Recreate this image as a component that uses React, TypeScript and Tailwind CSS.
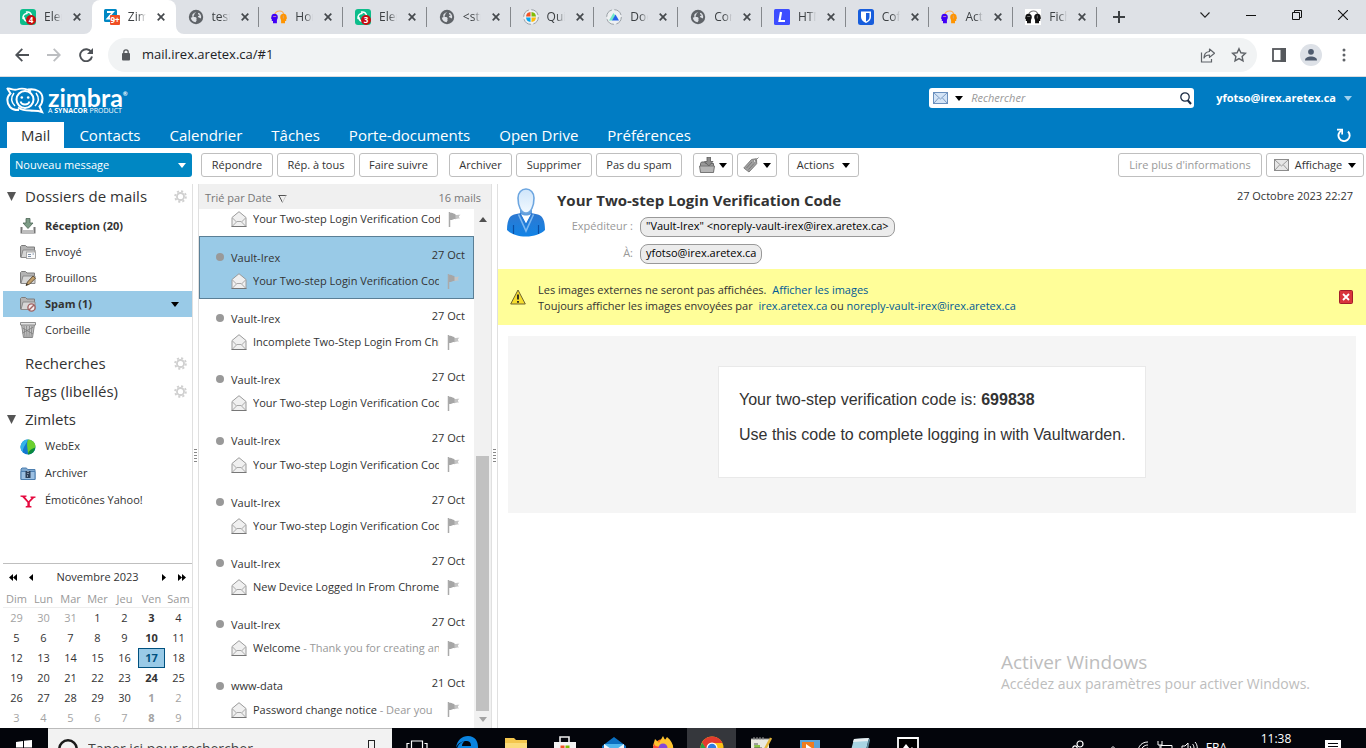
import { useState } from "react";
import type { ReactNode } from "react";

/* ---------- small shared icons ---------- */

const Caret = ({ className = "text-black" }: { className?: string }) => (
  <svg width="8" height="5" viewBox="0 0 8 5" className={`shrink-0 ${className}`}>
    <path d="M0 0h8L4 5z" fill="currentColor" />
  </svg>
);

const CloseMark = () => (
  <svg width="8" height="8" viewBox="0 0 8 8" className="shrink-0">
    <path d="M.7.7l6.6 6.6M7.3.7L.7 7.3" stroke="#45494d" strokeWidth="1.7" />
  </svg>
);

const Envelope = ({ tone = "gray" }: { tone?: "gray" | "blue" }) => (
  <svg width="15" height="12" viewBox="0 0 15 12" className="shrink-0">
    <rect
      x=".5"
      y=".5"
      width="14"
      height="11"
      fill={tone === "blue" ? "#d4e4f6" : "#e6e6e6"}
      stroke={tone === "blue" ? "#6b8fbd" : "#8c8c8c"}
    />
    <path
      d="M1 1l6.500 6L14 1M1 11l4.500-5M14 11L9.500 6"
      fill="none"
      stroke={tone === "blue" ? "#7d9cc4" : "#999"}
    />
  </svg>
);

const OpenEnvelope = () => (
  <svg width="16" height="16" viewBox="0 0 16 16" className="shrink-0">
    <path d="M1 6.500L8 .7l7 5.800v9H1z" fill="#f0f0f0" stroke="#9a9a9a" />
    <path d="M1.500 15L6 10.500h4l4.500 4.500M1.500 7l4 4M14.500 7l-4 4" fill="none" stroke="#a8a8a8" />
    <path d="M.5 15.500h15" stroke="#777" />
  </svg>
);

const Flag = () => (
  <svg width="13" height="15" viewBox="0 0 13 15" className="shrink-0">
    <path d="M1.500 0v15" stroke="#aaa" strokeWidth="1.500" />
    <path d="M6 3c2 .3 3-.3 6.500-.2C10.500 4 10.500 5 12 6.500 9 6.500 8 7.500 6 7z" fill="#c4c4c4" />
    <path d="M2 1c3-.8 3.500 1 5.500 1.200v4.500C5.500 7 4 8.300 2 8z" fill="#a6a6a6" />
  </svg>
);

const Gear = () => (
  <svg width="13" height="13" viewBox="0 0 14 14" className="shrink-0">
    <circle cx="7" cy="7" r="5.800" fill="none" stroke="#d0d0d0" strokeWidth="2" strokeDasharray="2.270 2.280" />
    <circle cx="7" cy="7" r="3.800" fill="none" stroke="#d0d0d0" strokeWidth="2" />
  </svg>
);

/* ---------- browser tab icons ---------- */

const ElementIcon = ({ count }: { count: string }) => (
  <svg width="16" height="16" viewBox="0 0 16 16">
    <rect width="16" height="16" rx="3" fill="#0dbd8b" />
    <path d="M6.500 3c3-.5 5 1.500 5 4M3 9.500C2.700 6.500 4.500 4.500 7 4.500M9 12.500c-3 .5-5-1.500-5-4" fill="none" stroke="#fff" strokeWidth="1.500" strokeLinecap="round" />
    <circle cx="11" cy="11" r="5" fill="#c70d12" />
    <text x="11" y="14" textAnchor="middle" fontSize="8" fontWeight="700" fill="#fff" fontFamily="Open Sans, sans-serif">{count}</text>
  </svg>
);

const ZimbraTabIcon = () => (
  <svg width="16" height="16" viewBox="0 0 16 16">
    <rect width="13" height="13" rx="1.500" fill="#0087c3" />
    <path d="M3 3h6L3.500 9.500H7" fill="none" stroke="#fff" strokeWidth="1.800" />
    <rect x="6" y="6" width="10" height="10" rx="1" fill="#f04e23" />
    <text x="11" y="14" textAnchor="middle" fontSize="8" fontWeight="700" fill="#fff" fontFamily="Open Sans, sans-serif">9+</text>
  </svg>
);

const GlobeIcon = () => (
  <svg width="16" height="16" viewBox="0 0 16 16">
    <circle cx="8" cy="8" r="7.200" fill="#5f6368" />
    <path d="M8.200 3.200c-.5 1-2.200 1-1.900 2.300.3 1-1.300 1-.8 2 .5.900 2.500.2 3 1.500.4 1-.5 1.500 0 2.100.5.800-.6 1.300-.8 2.200C5 13.200 3 11 2.800 8.500c1.700.2 1.800-.5 1.500-1.500C3.900 5.500 5.700 3.400 8.200 3.200z" fill="#dee1e6" />
    <path d="M10.300 3.800c-.7 1.200-.2 2 .8 2 .8 0 .6.800-.3 1-1.400.5-1 1.700.2 1.700 1 .1.800 1.200 2 .7.700-2.200-.4-4.600-2.700-5.400z" fill="#dee1e6" />
  </svg>
);

const HeadsIcon = ({ dark = false }: { dark?: boolean }) => (
  <svg width="16" height="16" viewBox="0 0 16 16">
    {dark && <path d="M0 0h16v16H0z" fill="#fff" />}
    <path d="M4 5C5 1.200 12 .8 12.500 5" fill="none" stroke={dark ? "#777" : "#ffad4d"} strokeWidth="1.200" />
    <path d="M.8 6C2.500 4 6.800 4.500 6.800 8c0 1.800-.9 2.300-.9 3.700v2.500H2V12H.8v-2L0 9.500z" fill={dark ? "#111" : "#4200f5"} />
    <path d="M15.200 6C13.500 4 9.200 4.500 9.200 8c0 1.800.9 2.300.9 3.700v2.500H14V12h1.200v-2l.8-.5z" fill={dark ? "#111" : "#ff9400"} />
    <path d="M2.200 7.500h3M12.300 6.500v3" stroke={dark ? "#888" : "#c9a5a0"} strokeWidth=".8" />
  </svg>
);

const QuarterIcon = () => (
  <svg width="16" height="16" viewBox="0 0 16 16">
    <circle cx="8" cy="8" r="7.300" fill="#eef0f2" stroke="#9aa0a6" strokeDasharray="9 2.500" />
    <path d="M7.500 3v4.500H3A5 5 0 017.500 3z" fill="#f35325" />
    <path d="M8.500 3v4.500H13A5 5 0 008.500 3z" fill="#81bc06" />
    <path d="M7.500 13V8.500H3A5 5 0 007.500 13z" fill="#05a6f0" />
    <path d="M8.500 13V8.500H13A5 5 0 018.500 13z" fill="#ffba08" />
  </svg>
);

const PeakIcon = () => (
  <svg width="16" height="16" viewBox="0 0 16 16">
    <circle cx="8" cy="8" r="7.300" fill="#eef0f2" stroke="#9aa0a6" strokeDasharray="9 2.500" />
    <path d="M3 11.500L7.500 4l1.800 2.500-3 5z" fill="#6ee7c8" />
    <path d="M6 11.500l3.500-6 3.500 6z" fill="#2563eb" />
  </svg>
);

const LetterIcon = () => (
  <svg width="16" height="16" viewBox="0 0 16 16">
    <rect width="16" height="16" rx="1.500" fill="#3d4dff" />
    <path d="M7 3L5.500 12h5.500" fill="none" stroke="#fff" strokeWidth="2.200" />
  </svg>
);

const ShieldIcon = () => (
  <svg width="16" height="16" viewBox="0 0 16 16">
    <rect width="16" height="16" rx="2.500" fill="#175ddc" />
    <path d="M3 2.500h10V8c0 3-2.500 5-5 6-2.500-1-5-3-5-6z" fill="#fff" />
    <path d="M8 4h3.500v4c0 2-1.500 3.500-3.500 4.500z" fill="#175ddc" />
  </svg>
);

interface BrowserTab {
  label: string;
  icon: ReactNode;
}

const browserTabs: BrowserTab[] = [
  { label: "Element", icon: <ElementIcon count="4" /> },
  { label: "Zimbra", icon: <ZimbraTabIcon /> },
  { label: "tests", icon: <GlobeIcon /> },
  { label: "Home", icon: <HeadsIcon /> },
  { label: "Element", icon: <ElementIcon count="3" /> },
  { label: "<strong", icon: <GlobeIcon /> },
  { label: "Quick", icon: <QuarterIcon /> },
  { label: "Docs", icon: <PeakIcon /> },
  { label: "Config", icon: <GlobeIcon /> },
  { label: "HTML", icon: <LetterIcon /> },
  { label: "Coffre", icon: <ShieldIcon /> },
  { label: "Activer", icon: <HeadsIcon /> },
  { label: "Fichier", icon: <HeadsIcon dark /> },
];

const TabStrip = () => (
  <div className="flex h-[34px] shrink-0 bg-[#dee1e6] pl-2">
    <div className="flex w-full max-w-[1089px]">
      {browserTabs.map((tab, i) => (
        <div
          key={i}
          className={`relative flex min-w-0 flex-1 items-center pl-3 ${i === 1 ? "rounded-t-lg bg-white" : ""}`}
        >
          <span className="h-4 w-4 shrink-0">{tab.icon}</span>
          <span className="ml-2 w-[18px] overflow-hidden text-xs whitespace-nowrap text-[#3c4043] [mask-image:linear-gradient(to_right,black_55%,transparent)]">
            {tab.label}
          </span>
          <button aria-label={`Fermer ${tab.label}`} className="ml-[11px]">
            <CloseMark />
          </button>
          {i > 1 && <span className="absolute top-[7px] right-0 h-5 w-px bg-[#85888c]" />}
          {i === 1 && (
            <>
              <svg width="8" height="8" viewBox="0 0 8 8" className="absolute bottom-0 -left-2">
                <path d="M8 0v8H0a8 8 0 008-8z" fill="#fff" />
              </svg>
              <svg width="8" height="8" viewBox="0 0 8 8" className="absolute -right-2 bottom-0">
                <path d="M0 0v8h8a8 8 0 01-8-8z" fill="#fff" />
              </svg>
            </>
          )}
        </div>
      ))}
    </div>
    <button aria-label="Nouvel onglet" className="ml-4">
      <svg width="12" height="12" viewBox="0 0 12 12">
        <path d="M6 0v12M0 6h12" stroke="#3c4043" strokeWidth="2" />
      </svg>
    </button>
    <div className="mb-1 ml-auto flex shrink-0 items-center gap-9 pr-[18px]">
      <button aria-label="Rechercher des onglets">
        <svg width="10" height="6" viewBox="0 0 10 6"><path d="M.5.500L5 5.200 9.500.5" fill="none" stroke="#222" strokeWidth="1.100" /></svg>
      </button>
      <button aria-label="Réduire">
        <svg width="10" height="10" viewBox="0 0 10 10"><path d="M0 5.500h10" stroke="#111" /></svg>
      </button>
      <button aria-label="Restaurer">
        <svg width="10" height="10" viewBox="0 0 10 10"><path d="M.5 2.500h7v7h-7zM2.500 2.500v-2h7v7h-2" fill="none" stroke="#111" /></svg>
      </button>
      <button aria-label="Fermer la fenêtre">
        <svg width="10" height="10" viewBox="0 0 10 10"><path d="M0 0l10 10M10 0L0 10" stroke="#111" strokeWidth="1.100" /></svg>
      </button>
    </div>
  </div>
);

const AddressBar = () => (
  <div className="flex h-[43px] shrink-0 items-center border-b border-[#dadce0] bg-white pr-5 pl-[15px]">
    <button aria-label="Précédent">
      <svg width="14" height="14" viewBox="0 0 14 14"><path d="M14 7H1.500M7.300.8L1.200 7l6.100 6.200" fill="none" stroke="#4d5156" strokeWidth="1.800" /></svg>
    </button>
    <button aria-label="Suivant" className="ml-[18px]">
      <svg width="14" height="14" viewBox="0 0 14 14"><path d="M0 7h12.500M6.700.8L12.800 7l-6.100 6.200" fill="none" stroke="#bcbec1" strokeWidth="1.800" /></svg>
    </button>
    <button aria-label="Actualiser" className="ml-[18px]">
      <svg width="14" height="14" viewBox="0 0 14 14">
        <path d="M12.300 4.200A6 6 0 1013 8.500" fill="none" stroke="#4d5156" strokeWidth="1.900" />
        <path d="M14 0v6H8z" fill="#4d5156" />
      </svg>
    </button>
    <div className="ml-[15px] flex h-[34px] flex-1 items-center rounded-full bg-[#f1f3f4] pl-[14px]">
      <svg width="8" height="12" viewBox="0 0 8 12" className="shrink-0">
        <path d="M1.800 5V3a2.200 2.200 0 014.400 0v2" fill="none" stroke="#55585c" strokeWidth="1.300" />
        <rect y="4" width="8" height="7.500" rx="1" fill="#55585c" />
      </svg>
      <input
        aria-label="Adresse"
        defaultValue="mail.irex.aretex.ca/#1"
        className="ml-3 min-w-0 flex-1 bg-transparent text-[13px] text-[#202124] outline-none"
      />
      <button aria-label="Partager">
        <svg width="15" height="15" viewBox="0 0 15 15">
          <path d="M1.500 4.500v9.500h10v-3" fill="none" stroke="#5f6368" strokeWidth="1.200" />
          <path d="M9.500 1l5 4.200-5 4.200V7c-3 0-4.500 1-5.500 3 0-3.500 2-6.200 5.500-6.500z" fill="none" stroke="#5f6368" strokeWidth="1.200" strokeLinejoin="round" />
        </svg>
      </button>
      <button aria-label="Favori" className="mr-2.5 ml-4">
        <svg width="16" height="16" viewBox="0 0 16 16">
          <path d="M8 1.700l1.900 4.100 4.500.5-3.300 3.100.9 4.500-4-2.300-4 2.300.9-4.500L1.600 6.300l4.500-.5z" fill="none" stroke="#5f6368" strokeWidth="1.400" />
        </svg>
      </button>
    </div>
    <button aria-label="Panneau latéral" className="ml-[15px]">
      <svg width="14" height="14" viewBox="0 0 14 14">
        <rect x="1" y="1" width="12" height="12" fill="none" stroke="#55585c" strokeWidth="1.800" />
        <rect x="8.500" width="5.500" height="14" fill="#55585c" />
      </svg>
    </button>
    <button aria-label="Profil" className="ml-[14px]">
      <svg width="22" height="22" viewBox="0 0 22 22">
        <circle cx="11" cy="11" r="11" fill="#dde1e7" />
        <circle cx="11" cy="7.800" r="2.900" fill="#4f5b6e" />
        <path d="M5 16.500c0-3 3-4 6-4s6 1 6 4z" fill="#4f5b6e" />
      </svg>
    </button>
    <button aria-label="Menu" className="ml-5">
      <svg width="4" height="14" viewBox="0 0 4 14" fill="#5f6368">
        <circle cx="2" cy="2" r="1.500" /><circle cx="2" cy="7" r="1.500" /><circle cx="2" cy="12" r="1.500" />
      </svg>
    </button>
  </div>
);

/* ---------- Zimbra header ---------- */

const apps = ["Mail", "Contacts", "Calendrier", "Tâches", "Porte-documents", "Open Drive", "Préférences"];

const AppHeader = ({ active, onSelect }: { active: string; onSelect: (name: string) => void }) => (
  <header className="shrink-0 bg-[#007cc3] text-white">
    <div className="flex h-[45px] items-start">
      <a href="#accueil" className="mt-2.5 ml-1.5 flex">
        <svg width="38" height="27" viewBox="0 0 38 27" fill="none" stroke="#fff">
          <path d="M1.500 1.500C7 2 8 3.500 11 2.500c5-1.700 11-.5 14 2" strokeWidth="1.800" />
          <path d="M1 1l3.500 5.500C.5 10 .3 15.500 4 20c2 2.200 5.500 3.200 9 3" strokeWidth="2" />
          <path d="M22 2.500c8-1.500 14.500 2.500 14.500 9 0 4-1 6-3 8l2.500 5.500c-5-2-8-1-12-1.500-5 0-9-1-12-3" strokeWidth="2" />
          <circle cx="19" cy="12.500" r="8.500" strokeWidth="2" />
          <path d="M14.500 14.500c1 4 8 4 9 0" strokeWidth="1.800" />
          <path d="M8 6c-3 4-3 9 1 13M30 6c3 4 3 9-1 13" strokeWidth="1.500" />
          <circle cx="15.800" cy="10.500" r="1.300" fill="#fff" stroke="none" />
          <circle cx="22.200" cy="10.500" r="1.300" fill="#fff" stroke="none" />
        </svg>
        <span className="ml-1 flex flex-col">
          <span className="flex font-[Lato] text-[25px] leading-5 font-bold">
            zimbra
            <span className="text-[6px] leading-[14px]">®</span>
          </span>
          <span className="text-[7px] leading-2">
            A <b>SYNACOR</b> PRODUCT
          </span>
        </span>
      </a>
      <div className="mt-[11px] ml-auto flex h-5 w-[265px] items-center rounded-[3px] bg-white pr-0.5 pl-1">
        <Envelope tone="blue" />
        <button aria-label="Type de recherche" className="ml-[7px]">
          <Caret />
        </button>
        <input
          type="search"
          aria-label="Rechercher"
          placeholder="Rechercher"
          className="ml-2 min-w-0 flex-1 bg-transparent text-[11px] text-black italic outline-none placeholder:text-[#999]"
        />
        <button aria-label="Lancer la recherche">
          <svg width="12" height="13" viewBox="0 0 12 13">
            <circle cx="5" cy="5" r="4.200" fill="none" stroke="#1b2c45" strokeWidth="1.300" />
            <path d="M7.500 8l3.500 4" stroke="#1b2c45" strokeWidth="2" />
          </svg>
        </button>
      </div>
      <button className="mt-[11px] mr-[14px] ml-[22px] flex h-5 items-center gap-2 text-[11px] font-bold">
        yfotso@irex.aretex.ca
        <Caret className="text-[#9fd0ee]" />
      </button>
    </div>
    <nav className="flex h-[26px] items-center pl-[7px]">
      {apps.map((name) => (
        <a
          key={name}
          href={`#${name}`}
          onClick={() => onSelect(name)}
          className={`mr-px flex h-full items-center px-[14px] text-[15px] whitespace-nowrap ${active === name ? "bg-white text-[#333]" : ""}`}
        >
          {name}
        </a>
      ))}
      <button aria-label="Actualiser la boîte" className="mr-[15px] ml-auto">
        <svg width="14" height="14" viewBox="0 0 14 14">
          <path d="M4.500 2.500A5.600 5.600 0 1011 3.500" fill="none" stroke="#fff" strokeWidth="1.900" />
          <path d="M0 .8h6v5.700H4.300V2.500H0z" fill="#fff" />
        </svg>
      </button>
    </nav>
  </header>
);

/* ---------- action toolbar ---------- */

const ToolButton = ({ className, children, label }: { className: string; children: ReactNode; label?: string }) => (
  <button
    aria-label={label}
    className={`flex h-6 shrink-0 items-center justify-center rounded-[3px] border border-[#bfbfbf] bg-white text-[11px] whitespace-nowrap ${className}`}
  >
    {children}
  </button>
);

const Toolbar = () => (
  <div className="flex h-9 shrink-0 items-center bg-white pr-0.5 pb-0.5 pl-2.5 text-[#333]">
    <button className="mr-[9px] flex h-6 w-[182px] shrink-0 items-center justify-between rounded-[3px] bg-[#0087c3] pr-1.5 pl-[5px] text-[11px] text-white">
      Nouveau message
      <Caret className="text-white" />
    </button>
    <ToolButton className="w-[72px]">Répondre</ToolButton>
    <ToolButton className="ml-1 w-[78px]">Rép. à tous</ToolButton>
    <ToolButton className="ml-1 w-[79px]">Faire suivre</ToolButton>
    <ToolButton className="ml-[11px] w-[63px]">Archiver</ToolButton>
    <ToolButton className="ml-1 w-[76px]">Supprimer</ToolButton>
    <ToolButton className="ml-1 w-[86px]">Pas du spam</ToolButton>
    <ToolButton className="ml-[11px] w-10 gap-1" label="Déplacer">
      <svg width="16" height="16" viewBox="0 0 16 16">
        <path d="M1.500 15V6.500l1-1.500h3l1 1.500h8V15z" fill="#999" stroke="#666" />
        <path d="M.5 9h15l-1 6.500h-13z" fill="#b5b5b5" stroke="#777" />
        <path d="M8 0h3.500v4.500H14L9.800 9 5.500 4.500H8z" fill="#8b8b8b" stroke="#5a5a5a" strokeWidth=".8" />
      </svg>
      <Caret />
    </ToolButton>
    <ToolButton className="ml-1 w-10 gap-1" label="Étiquettes">
      <svg width="16" height="16" viewBox="0 0 16 16">
        <path d="M.8 11L8.500 2.500l5-.8.200 5L6 15z" fill="#a0a0a0" stroke="#808080" />
        <path d="M3.500 11l5.500-6M5.500 12.500l5.500-6" stroke="#7a7a7a" />
        <circle cx="11.700" cy="4" r="1.200" fill="#fff" stroke="#666" strokeWidth=".6" />
        <path d="M12 4l3.500-3.500" stroke="#888" />
      </svg>
      <Caret />
    </ToolButton>
    <ToolButton className="ml-[11px] w-[71px] gap-2">
      Actions
      <Caret />
    </ToolButton>
    <ToolButton className="ml-auto w-[144px] text-[#999]">Lire plus d&apos;informations</ToolButton>
    <ToolButton className="ml-1 w-[98px] gap-[6px]">
      <Envelope />
      Affichage
      <Caret />
    </ToolButton>
  </div>
);

/* ---------- folder tree ---------- */

const FolderBase = () => (
  <>
    <path d="M.5 13V2.500l1-1h4l1.500 1.500h7.500V13z" fill="#b4b4b4" stroke="#7c7c7c" />
    <path d="M1 13.500L3 6h12v7.500z" fill="#d6d6d6" stroke="#8b8b8b" />
  </>
);

const folders = [
  {
    name: "Réception (20)",
    icon: (
      <svg width="16" height="16" viewBox="0 0 16 16">
        <path d="M1.500 9v5.500h13V9" fill="none" stroke="#777" strokeWidth="2" />
        <path d="M2 12h12v3H2z" fill="#bdbdbd" />
        <path d="M6 .5h4V5h3L8 10.500 3 5h3z" fill="#7d9c86" stroke="#4c6655" strokeWidth=".8" />
      </svg>
    ),
    bold: true,
  },
  {
    name: "Envoyé",
    icon: (
      <svg width="16" height="16" viewBox="0 0 16 16">
        <FolderBase />
        <rect x="6.500" y="8" width="9" height="6.500" fill="#fafafa" stroke="#999" strokeWidth=".8" />
        <path d="M8 10.500h3M8 12.500h3M12.500 10h1.500" stroke="#7d8fa8" />
      </svg>
    ),
  },
  {
    name: "Brouillons",
    icon: (
      <svg width="16" height="16" viewBox="0 0 16 16">
        <FolderBase />
        <path d="M6 15.500l1.500-3.500L13 6l2.500 2.200-6 6z" fill="#c2a06b" stroke="#5b4a33" strokeWidth=".9" />
        <path d="M6 15.500l.8-2 1.200 1.200z" fill="#222" />
      </svg>
    ),
  },
  {
    name: "Spam (1)",
    icon: (
      <svg width="16" height="16" viewBox="0 0 16 16">
        <FolderBase />
        <circle cx="11.500" cy="11.500" r="3.600" fill="#f4eeee" stroke="#a06464" strokeWidth="1.400" />
        <path d="M9 14l5-5" stroke="#a06464" strokeWidth="1.400" />
      </svg>
    ),
    bold: true,
  },
  {
    name: "Corbeille",
    icon: (
      <svg width="16" height="16" viewBox="0 0 16 16">
        <path d="M1.500 2.500h13L12.500 15.500h-9z" fill="#c4c4c4" stroke="#888" />
        <path d="M4 4l1 11M6.500 4l.5 11M9.500 4L9 15M12 4l-1 11M2.500 6l10.500 6M2.500 11L13.500 5" stroke="#777" strokeWidth=".7" />
        <path d="M.5.5h15V3H.5z" fill="#e4e4e4" stroke="#777" strokeWidth=".8" />
      </svg>
    ),
  },
];

const zimlets = [
  {
    name: "WebEx",
    icon: (
      <svg width="16" height="16" viewBox="0 0 16 16">
        <circle cx="8" cy="8" r="7.500" fill="#1478d0" />
        <path d="M8 .5a7.500 7.500 0 00-5 13C2 9 6 6 8 .5z" fill="#35b4e8" />
        <path d="M8 .5C6 5 8 10 8 15.500 11 14 15 11 15.500 7 15 3 12 .8 8 .5z" fill="#6bd02e" />
        <path d="M8 15.500c0-3 2-5 7.300-7A7.500 7.500 0 018 15.500z" fill="#0b8a3c" />
      </svg>
    ),
  },
  {
    name: "Archiver",
    icon: (
      <svg width="16" height="16" viewBox="0 0 16 16">
        <path d="M1 13.500V3l1-1h4.500l1 1.500H15v10z" fill="#7fa8cf" stroke="#4d7fb0" />
        <path d="M1 13.500V5.500h14v8z" fill="#9cc0e2" stroke="#4d7fb0" />
        <path d="M5.500 5h5v7h-5z" fill="#2c3e57" />
        <path d="M8 5v4M7 10h2" stroke="#d5e3f0" strokeDasharray="1 1" />
      </svg>
    ),
  },
  {
    name: "Émoticônes Yahoo!",
    icon: (
      <svg width="16" height="16" viewBox="0 0 16 16">
        <path d="M.5 2.500h6v1.200L5 4 8.500 8.200l3-3.200-1-.3V3.500h5v1.200l-1.500.4L9.800 9.300v3.500l1.700.4v1.300H5.700v-1.300l1.700-.4V9.500L2.300 4 .5 3.700z" fill="#e5093f" />
      </svg>
    ),
  },
];

const TreeHeading = ({ title, open = false, gear = false }: { title: string; open?: boolean; gear?: boolean }) => (
  <h2 className="flex h-7 items-center pr-[5px] pl-1 text-[15px]">
    <span className="w-[18px]">
      {open && (
        <svg width="9" height="9" viewBox="0 0 9 9"><path d="M0 0h9L4.500 9z" fill="#555" /></svg>
      )}
    </span>
    <span className="flex-1">{title}</span>
    {gear && <Gear />}
  </h2>
);

const weekDays = ["Dim", "Lun", "Mar", "Mer", "Jeu", "Ven", "Sam"];
const weeks = [
  [29, 30, 31, 1, 2, 3, 4],
  [5, 6, 7, 8, 9, 10, 11],
  [12, 13, 14, 15, 16, 17, 18],
  [19, 20, 21, 22, 23, 24, 25],
  [26, 27, 28, 29, 30, 1, 2],
  [3, 4, 5, 6, 7, 8, 9],
];

const dayClass = (row: number, col: number, day: number) => {
  const outside = (row === 0 && day > 20) || (row > 3 && day < 20);
  const today = row === 2 && day === 17;
  const color = today
    ? "bg-[#99cae7] text-[#00517f] outline outline-[#00517f] -outline-offset-1"
    : outside
      ? "text-[#a3a3a3]"
      : "text-[#333]";
  // Fridays carry a weekly appointment
  return `${color} ${col === 5 ? "font-bold" : ""}`;
};

const MiniCalendar = () => (
  <div className="mt-auto shrink-0 border-t border-[#bfbfbf] text-[11px]">
    <div className="flex h-7 items-center pr-1.5 pl-1.5">
      <button aria-label="Année précédente">
        <svg width="8" height="7" viewBox="0 0 8 7"><path d="M4 0v7L0 3.500zM8 0v7L4 3.500z" /></svg>
      </button>
      <button aria-label="Mois précédent" className="ml-3">
        <svg width="4" height="7" viewBox="0 0 4 7"><path d="M4 0v7L0 3.500z" /></svg>
      </button>
      <span className="flex-1 text-center">Novembre 2023</span>
      <button aria-label="Mois suivant" className="mr-3">
        <svg width="4" height="7" viewBox="0 0 4 7"><path d="M0 0v7l4-3.500z" /></svg>
      </button>
      <button aria-label="Année suivante">
        <svg width="8" height="7" viewBox="0 0 8 7"><path d="M0 0v7l4-3.500zM4 0v7l4-3.500z" /></svg>
      </button>
    </div>
    <table className="w-full table-fixed text-center">
      <thead>
        <tr className="h-4 border-b border-[#eee] leading-3 text-[#999]">
          {weekDays.map((d) => (
            <th key={d} className="p-0 font-normal">{d}</th>
          ))}
        </tr>
      </thead>
      <tbody>
        {weeks.map((week, row) => (
          <tr key={row} className="h-5 leading-5">
            {week.map((day, col) => (
              <td key={col} className={`p-0 ${dayClass(row, col, day)}`}>{day}</td>
            ))}
          </tr>
        ))}
      </tbody>
    </table>
  </div>
);

const Sidebar = () => (
  <aside className="flex w-[192px] shrink-0 flex-col pl-[3px] text-[#333]">
    <div className="-mt-0.5 mb-[3px]">
      <TreeHeading title="Dossiers de mails" open gear />
    </div>
    {folders.map((f) => (
      <a
        key={f.name}
        href={`#${f.name}`}
        className={`flex h-[26px] items-center gap-[9px] pr-[13px] pl-[17px] text-[11px] ${f.bold ? "font-bold" : ""} ${f.name === "Spam (1)" ? "bg-[#99cae7]" : ""}`}
      >
        {f.icon}
        <span className="flex-1">{f.name}</span>
        {f.name === "Spam (1)" && <Caret />}
      </a>
    ))}
    <div className="mt-1.5">
      <TreeHeading title="Recherches" gear />
      <TreeHeading title="Tags (libellés)" gear />
      <TreeHeading title="Zimlets" open />
    </div>
    {zimlets.map((z) => (
      <a key={z.name} href={`#${z.name}`} className="flex h-[27px] items-center gap-[9px] pl-[17px] text-[11px]">
        {z.icon}
        {z.name}
      </a>
    ))}
    <MiniCalendar />
  </aside>
);

/* ---------- splitter between columns ---------- */

const Splitter = () => (
  <div className="flex w-[7px] shrink-0 items-center justify-center border-x border-[#e0e0e0] bg-white">
    <svg width="3" height="14" viewBox="0 0 3 14">
      <path d="M0 .5h3M0 3.500h3M0 6.500h3M0 9.500h3M0 12.500h3" stroke="#888" />
    </svg>
  </div>
);

/* ---------- message list ---------- */

interface Message {
  from: string;
  date: string;
  subject: string;
  preview?: string;
}

const code = "Your Two-step Login Verification Code";

const messages: Message[] = [
  { from: "Vault-Irex", date: "27 Oct", subject: code },
  { from: "Vault-Irex", date: "27 Oct", subject: "Incomplete Two-Step Login From Chrome" },
  { from: "Vault-Irex", date: "27 Oct", subject: code },
  { from: "Vault-Irex", date: "27 Oct", subject: code },
  { from: "Vault-Irex", date: "27 Oct", subject: code },
  { from: "Vault-Irex", date: "27 Oct", subject: "New Device Logged In From Chrome" },
  { from: "Vault-Irex", date: "27 Oct", subject: "Welcome", preview: "Thank you for creating an account" },
  { from: "www-data", date: "21 Oct", subject: "Password change notice", preview: "Dear you" },
];

const SubjectLine = ({ subject, preview }: { subject: string; preview?: string }) => (
  <div className="flex items-center pr-[13px] pl-8">
    <OpenEnvelope />
    <span className="ml-[6px] min-w-0 flex-1 overflow-hidden whitespace-nowrap">
      {subject}
      {preview && <span className="text-[#999]"> - {preview}</span>}
    </span>
    <span className="ml-2">
      <Flag />
    </span>
  </div>
);

const MessageList = () => (
  <section className="flex w-[292px] shrink-0 flex-col text-[11px] text-[#333]">
    <div className="flex h-[25px] shrink-0 items-center bg-[#f0f0f0] pt-1 pr-2.5 pl-[6px] text-[#777]">
      Trié par Date
      <svg width="9" height="8" viewBox="0 0 9 8" className="ml-1.5">
        <path d="M.5.500h8M1 .5l3.500 7" fill="none" stroke="#555" />
        <path d="M8 .5L4.500 7.500" stroke="#ccc" />
      </svg>
      <span className="ml-auto">16 mails</span>
    </div>
    <div className="flex min-h-0 flex-1">
      <div className="flex min-w-0 flex-1 flex-col">
        <div className="h-[27px] shrink-0 leading-5">
          <SubjectLine subject={code} />
        </div>
        {messages.map((m, i) => (
          <div
            key={i}
            className={
              i === 0
                ? "h-[63px] shrink-0 border border-[#5a7f96] bg-[#99cae7] pt-2"
                : "min-h-0 flex-1 basis-0 border-x border-transparent pt-[7px]"
            }
          >
            <div className="flex h-6 items-center pr-2 pl-4">
              <span className="h-2 w-2 rounded-full bg-[#999]" />
              <span className="ml-[7px] flex-1 pt-0.5">{m.from}</span>
              <span className="pb-1">{m.date}</span>
            </div>
            <div className="-ml-px leading-6">
              <SubjectLine subject={m.subject} preview={m.preview} />
            </div>
          </div>
        ))}
      </div>
      <div className="flex w-[17px] shrink-0 flex-col items-center bg-[#f1f1f1] pt-2 pb-1.5">
        <Caret className="rotate-180 text-[#505050]" />
        <div className="mt-auto h-[255px] w-[13px] bg-[#c1c1c1]" />
        <Caret className="mt-1.5 text-[#a3a3a3]" />
      </div>
    </div>
  </section>
);

/* ---------- reading pane ---------- */

const Avatar = () => (
  <svg width="40" height="49" viewBox="0 0 40 49" className="shrink-0">
    <defs>
      <linearGradient id="head" x1="0" y1="0" x2="0" y2="1">
        <stop offset="0" stopColor="#cfe5fa" />
        <stop offset="1" stopColor="#f2f9ff" />
      </linearGradient>
      <linearGradient id="body" x1="0" y1="0" x2="0" y2="1">
        <stop offset="0" stopColor="#2f78d0" />
        <stop offset="1" stopColor="#1183e6" />
      </linearGradient>
    </defs>
    <path d="M14 22h12v6H14z" fill="#5f9ede" />
    <path d="M1 42c0-9 2-14 7-15.500l7-1.500 5 10 5-10 7 1.500c5 1.500 7 6.500 7 15.500-4 4-11 6.500-19 6.500S5 46 1 42z" fill="url(#body)" />
    <path d="M15 26l5 9 5-9c-3 2-7 2-10 0z" fill="#fff" />
    <path d="M12.500 26.500L20 43l7.500-16.500" fill="none" stroke="#7db8f0" strokeWidth="1.600" />
    <path d="M7.500 46v-9M32.500 46v-9" stroke="#0a4fa5" strokeWidth="1.200" />
    <path d="M12 10c0-5.500 3.500-9 8-9s8 3.500 8 9c0 8-3 15-8 15s-8-7-8-15z" fill="url(#head)" stroke="#6da6e0" strokeWidth="1.600" />
  </svg>
);

const AddressRow = ({ label, value }: { label: string; value: string }) => (
  <div className="flex h-[27px] items-center">
    <dt className="w-[76px] shrink-0 text-right text-[#999]">{label}</dt>
    <dd className="ml-[7px] flex h-5 items-center rounded-lg border border-[#999] bg-[#ececec] px-[5px] whitespace-nowrap text-black">
      {value}
    </dd>
  </div>
);

const ReadingPane = () => (
  <main className="flex min-w-0 flex-1 flex-col bg-white text-[11px] text-[#333]">
    <div className="flex h-[85px] shrink-0 pt-1 pl-2">
      <Avatar />
      <div className="ml-[11px] flex-1">
        <h1 className="h-[25px] text-[15px] leading-6 font-bold">Your Two-step Login Verification Code</h1>
        <dl>
          <AddressRow label="Expéditeur :" value={'"Vault-Irex" <noreply-vault-irex@irex.aretex.ca>'} />
          <AddressRow label="À:" value="yfotso@irex.aretex.ca" />
        </dl>
      </div>
      <time className="pr-[13px]">27 Octobre 2023 22:27</time>
    </div>

    <div className="flex h-14 shrink-0 items-center bg-[#fffe99] pr-[13px] pl-3">
      <svg width="16" height="16" viewBox="0 0 16 16" className="shrink-0">
        <path d="M8 1l7.300 14H.7z" fill="#f5dd2e" stroke="#6f6431" strokeLinejoin="round" />
        <path d="M8 5.500v5M8 12v1.800" stroke="#222" strokeWidth="1.800" />
      </svg>
      <p className="ml-3 flex-1 pt-0.5 leading-4">
        Les images externes ne seront pas affichées.&nbsp;{" "}
        <a href="#images" className="text-[#005a95]">Afficher les images</a>
        <br />
        Toujours afficher les images envoyées par&nbsp;{" "}
        <a href="#domaine" className="text-[#005a95]">irex.aretex.ca</a> ou{" "}
        <a href="#expediteur" className="text-[#005a95]">noreply-vault-irex@irex.aretex.ca</a>
      </p>
      <button aria-label="Fermer">
        <svg width="14" height="14" viewBox="0 0 14 14">
          <rect x=".5" y=".5" width="13" height="13" rx="1" fill="#d9343c" stroke="#a11d2a" />
          <path d="M4 4l6 6M10 4l-6 6" stroke="#fff" strokeWidth="1.800" />
        </svg>
      </button>
    </div>

    <div className="mx-2.5 mt-[11px] flex h-[177px] shrink-0 justify-center bg-[#f5f5f5] pt-[30px] font-['Liberation_Sans',sans-serif] text-base text-[#333]">
      <div className="h-28 w-[428px] border border-[#e9e9e9] bg-white px-5 pt-[21px] leading-6">
        <p>
          Your two-step verification code is: <b>699838</b>
        </p>
        <p className="mt-[11px] whitespace-nowrap">Use this code to complete logging in with Vaultwarden.</p>
      </div>
    </div>

    <div className="mt-auto mr-14 mb-[34px] ml-auto text-[#bdbdbd]">
      <p className="text-[19px] leading-6">Activer Windows</p>
      <p className="text-sm leading-5 whitespace-nowrap">Accédez aux paramètres pour activer Windows.</p>
    </div>
  </main>
);

/* ---------- Windows taskbar, its lower half is off screen ---------- */

const taskbarApps = [
  {
    name: "Edge",
    icon: <path d="M1 12C2 4 7 0 13 0c7 0 10 5 10 11v3H8c0 4 6 6 13 3v5c-9 4-19 1-19-8 0-5 4-8 8-9-2 1-3 3-3 5h9c0-4-2-5-5-5-4 0-8 2-10 7z" fill="#0a84e0" />,
  },
  {
    name: "Explorateur",
    icon: (
      <>
        <path d="M1 2h9l2 2h11v18H1z" fill="#f3c64e" />
        <path d="M1 7h22v15H1z" fill="#fbdc7d" />
      </>
    ),
  },
  {
    name: "Store",
    icon: (
      <>
        <path d="M7 6V1h9v5" fill="none" stroke="#eee" strokeWidth="1.600" />
        <path d="M1 6h22v16H1z" fill="#f4f4f4" />
        <path d="M7.500 9.500h4v4h-4z" fill="#f25022" />
        <path d="M12.500 9.500h4v4h-4z" fill="#7fba00" />
      </>
    ),
  },
  {
    name: "Courrier",
    icon: (
      <>
        <path d="M0 10L12 1l12 9v12H0z" fill="#0b6fc0" />
        <path d="M2 8h20v4l-10 7L2 12z" fill="#eef6fc" />
        <path d="M2 8h20l-10 7z" fill="#4fb6ee" />
      </>
    ),
  },
  {
    name: "Firefox",
    icon: (
      <>
        <circle cx="12" cy="13" r="10" fill="#ff7a1a" />
        <path d="M2 10L4 3l4 4 4-7 2 4 2-3c5 4 7 9 6 13H10z" fill="#ffc42e" />
        <path d="M3 6c0 5 3 4 6 5l-2 6-5-1z" fill="#ff4b3a" />
        <circle cx="12" cy="12" r="4.500" fill="#8347d8" />
      </>
    ),
  },
  {
    name: "Chrome",
    icon: (
      <>
        <circle cx="12" cy="12" r="11.500" fill="#fbc116" />
        <path d="M2 6.500A11.500 11.500 0 0122.500 7H12l-6 6z" fill="#e33b2e" />
        <path d="M2 6.500A11.500 11.500 0 0010 23l5-8-8-1z" fill="#24a148" />
        <circle cx="12" cy="12" r="5.500" fill="#fff" />
        <circle cx="12" cy="12" r="4.300" fill="#2f7de1" />
      </>
    ),
  },
  {
    name: "Notepad++",
    icon: (
      <>
        <path d="M2 3h18v19H2z" fill="#e9e9e0" />
        <path d="M2 3h18M5 1v3M8 1v3M11 1v3M14 1v3" stroke="#999" />
        <path d="M5 9h6v5H6z" fill="#8bc34a" />
        <path d="M22 2l-7 13" stroke="#e3b63b" strokeWidth="2.500" />
        <path d="M5 8h4M5 12h8" stroke="#555" />
      </>
    ),
  },
  {
    name: "Lecteur",
    icon: (
      <>
        <path d="M2 4h20v18H2z" fill="#5ba3d6" />
        <path d="M4 6h12v14H4z" fill="#f07c1e" />
        <path d="M8 8l7 5-7 5z" fill="#fff" />
      </>
    ),
  },
  {
    name: "Bloc-notes",
    icon: (
      <>
        <path d="M7 3l15-1-5 20H2z" fill="#a8d4e2" />
        <path d="M7 3l15-1-1 3-15 1z" fill="#e8eef0" />
        <path d="M17 22l5-20 1 2-4 18z" fill="#5e8b9c" />
      </>
    ),
  },
  {
    name: "Photos",
    icon: (
      <>
        <path d="M2 2h20v20H2z" fill="#000" stroke="#fff" strokeWidth="1.800" />
        <path d="M4 16l6-8 4 5 2-2 5 6v5H4z" fill="#fff" />
      </>
    ),
  },
];

const Taskbar = () => (
  <footer className="h-5 shrink-0 overflow-hidden bg-[#03050b]">
    <div className="flex h-10 text-white">
      <button aria-label="Démarrer" className="flex w-12 shrink-0 items-center justify-center">
        <svg width="16" height="16" viewBox="0 0 16 16" fill="#fff">
          <path d="M0 2l7-1v6.500H0zM8 .8L16 0v7.500H8zM0 8.500h7V15l-7-1zM8 8.500h8V16l-8-1z" />
        </svg>
      </button>
      <label className="flex w-[344px] shrink-0 items-center border-t border-[#bbb] bg-[#f2f2f2] pr-4 pl-2.5">
        <svg width="20" height="20" viewBox="0 0 20 20" className="shrink-0">
          <circle cx="10" cy="10" r="8.700" fill="none" stroke="#1a1a1a" strokeWidth="2.500" />
        </svg>
        <input
          aria-label="Recherche Windows"
          placeholder="Taper ici pour rechercher"
          className="ml-2.5 min-w-0 flex-1 bg-transparent text-sm outline-none placeholder:text-[#444]"
        />
        <svg width="9" height="18" viewBox="0 0 9 18" className="shrink-0">
          <rect x="1.500" y=".5" width="6" height="11" fill="none" stroke="#222" />
        </svg>
      </label>
      <button aria-label="Affichage des tâches" className="flex w-[50px] shrink-0 items-center justify-center">
        <svg width="22" height="16" viewBox="0 0 22 16" fill="none" stroke="#fff" strokeWidth="1.200">
          <path d="M5.500 1h11v14h-11zM3.500 3.500H1v9h2.500M18.500 3.500H21v9h-2.500" />
        </svg>
      </button>
      {taskbarApps.map((app) => (
        <button
          key={app.name}
          aria-label={app.name}
          className={`flex w-[49px] shrink-0 items-center justify-center ${app.name === "Chrome" ? "bg-[#35373c]" : ""}`}
        >
          <svg width="24" height="24" viewBox="0 0 24 24">{app.icon}</svg>
        </button>
      ))}
      <div className="ml-auto flex items-center pr-[25px] text-xs">
        <svg width="14" height="16" viewBox="0 0 14 16" fill="none" stroke="#fff" strokeWidth="1.200">
          <circle cx="9" cy="4" r="3" /><circle cx="4" cy="8" r="2.200" /><path d="M4 15c0-7 9-7 9 0" />
        </svg>
        <svg width="8" height="5" viewBox="0 0 8 5" className="ml-6" fill="none" stroke="#fff"><path d="M0 4.500l4-4 4 4" /></svg>
        <svg width="12" height="14" viewBox="0 0 12 14" className="ml-5" fill="none" stroke="#fff">
          <path d="M1 11C1 5 5 1 11 1M4 11c0-4 3-7 7-7M7 11c0-2 2-4 4-4" />
        </svg>
        <svg width="16" height="14" viewBox="0 0 16 14" className="ml-2" fill="none" stroke="#fff">
          <path d="M4 4.500h11v6H4zM1 0v4h4V0M3 4v6" />
        </svg>
        <svg width="18" height="14" viewBox="0 0 18 14" className="ml-2" fill="none" stroke="#fff">
          <path d="M1 5h3l3-3v10L4 9H1zM9 5c1 1 1 3 0 4M11.500 3c2 2 2 6 0 8M14 1c3 3 3 9 0 12" />
        </svg>
        <span className="mr-2 ml-[7px]">FRA</span>
        <div className="ml-2 flex h-10 w-[66px] flex-col items-center pt-0.5 leading-[17px]">
          <span>11:38</span>
          <span>17/11/2023</span>
        </div>
        <svg width="16" height="16" viewBox="0 0 16 16" className="ml-4">
          <path d="M0 0h16v12H9l-4 4v-4H0z" fill="#fff" />
          <path d="M3 3.500h10M3 6.500h10" stroke="#03050b" />
        </svg>
      </div>
    </div>
  </footer>
);

export default function App() {
  const [active, setActive] = useState("Mail");

  return (
    <div className="flex h-screen flex-col overflow-hidden bg-white font-['Open_Sans','Noto_Sans',sans-serif]">
      <TabStrip />
      <AddressBar />
      <AppHeader active={active} onSelect={setActive} />
      <Toolbar />
      <div className="flex min-h-0 flex-1">
        <Sidebar />
        <Splitter />
        <MessageList />
        <Splitter />
        <ReadingPane />
      </div>
      <Taskbar />
    </div>
  );
}
